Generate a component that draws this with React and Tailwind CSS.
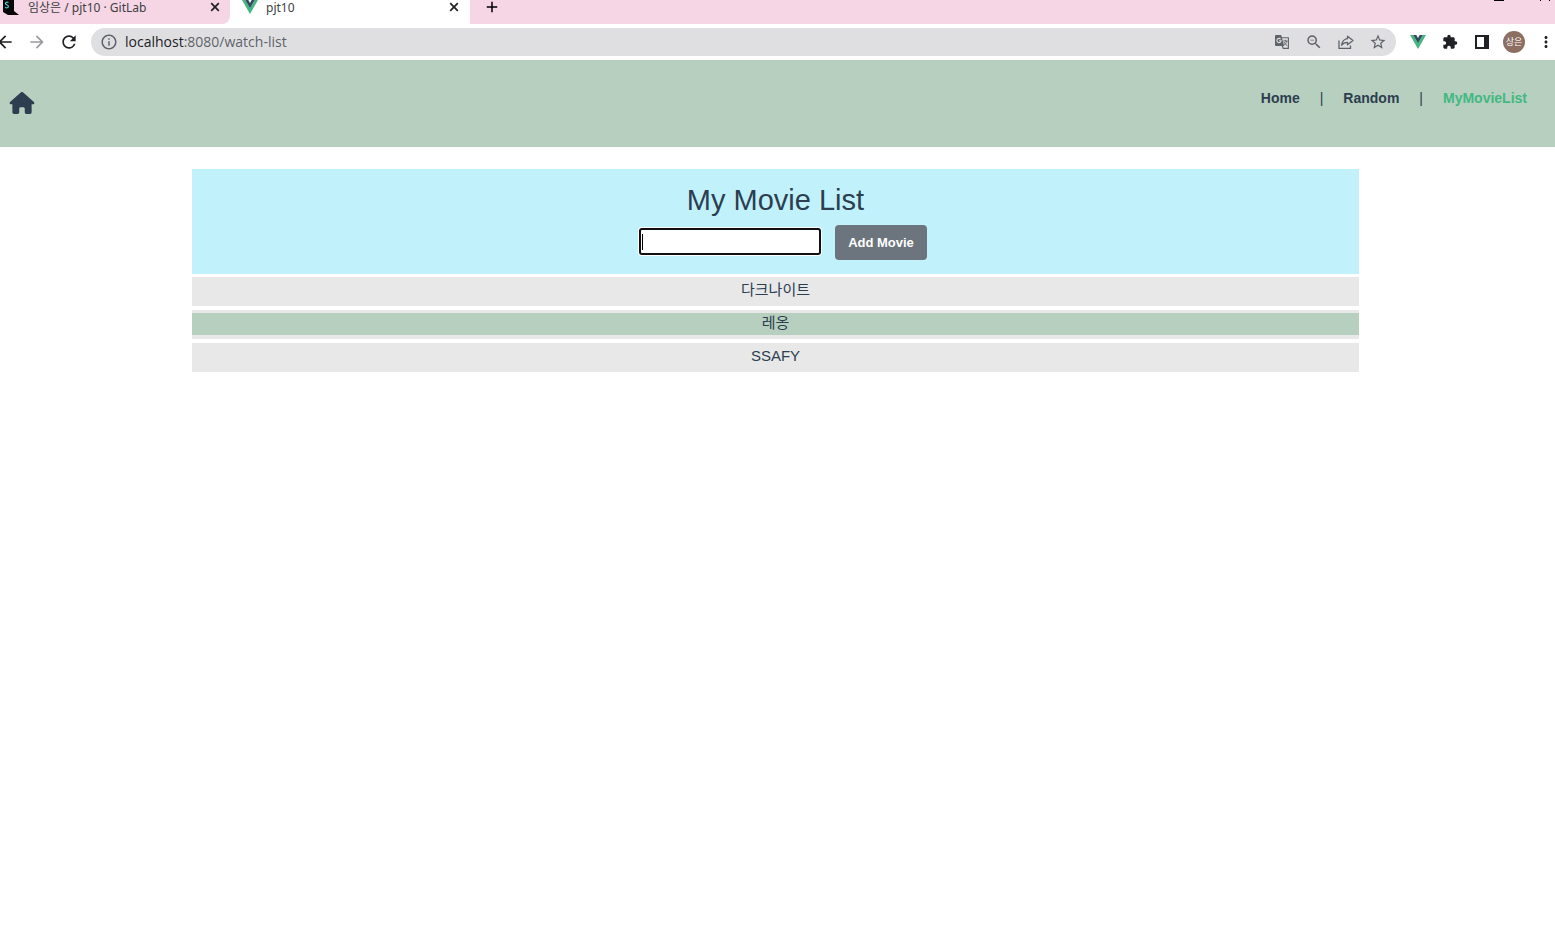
import { useState } from "react";
import { MdArrowBack, MdArrowForward, MdRefresh, MdInfoOutline, MdZoomOut, MdStarBorder, MdExtension, MdMoreVert, MdAdd } from "react-icons/md";
import { FaHouse } from "react-icons/fa6";

function VueLogo({ className }) {
  return (
    <svg viewBox="0 0 16 14" className={className} aria-hidden="true">
      <path d="M0 0h3.2L8 8.3 12.8 0H16L8 14z" fill="#41b883" />
      <path d="M3.2 0h3.1L8 3.1 9.7 0h3.1L8 8.3z" fill="#34495e" />
    </svg>
  );
}

function CloseIcon() {
  return (
    <svg viewBox="0 0 14 14" className="size-[14px]" fill="none" stroke="#202124" strokeWidth="1.7" aria-hidden="true">
      <path d="M3.2 3.2L10.8 10.8M10.8 3.2L3.2 10.8" />
    </svg>
  );
}

function TranslateIcon() {
  return (
    <svg viewBox="0 0 16 16" className="size-4" fill="none" aria-hidden="true">
      <path d="M7.5 3.8H14.4V14.4H9.2L8.2 11.8" stroke="#5f6368" strokeWidth="1.1" />
      <path d="M9.3 7H13.6M11.4 5.8V7M12.8 7C12.3 9.2 11 10.6 9.6 11.4M10.1 8.2C10.8 9.6 12 10.9 13.4 11.8" stroke="#5f6368" />
      <path d="M2 1H7.2L10.2 12H2A1 1 0 0 1 1 11V2A1 1 0 0 1 2 1Z" fill="#5f6368" />
      <path d="M6.6 5.1A2.1 2.1 0 1 0 7.1 6.7H5.1" stroke="#dfdfe2" strokeWidth="1.1" />
    </svg>
  );
}

function ShareIcon() {
  return (
    <svg viewBox="0 0 16 16" className="size-4" fill="none" stroke="#5f6368" strokeWidth="1.3" aria-hidden="true">
      <path d="M1 6.5V14.3H12.5V11.5" />
      <path d="M9.5 2.2L15 6.5L9.5 10.8V8.4C7 8.4 5 9.2 3.6 11.2C4.1 7.8 6 5.2 9.5 4.7Z" strokeLinejoin="round" />
    </svg>
  );
}

function TabStrip() {
  return (
    <div className="flex h-6 bg-[#f6d5e4] text-xs text-[#3c4043]">
      <div className="flex w-[470px] shrink-0 bg-white">
        <div className="flex h-6 w-[230px] items-start rounded-br-lg bg-[#f6d5e4] pl-[3px] pr-2">
          <svg viewBox="0 0 16 15" className="h-[15px] w-4 shrink-0" aria-hidden="true">
            <path d="M0 0H11V11L16 15H5L0 12Z" fill="#080808" />
            <path d="M5.5 2.6C4 1.7 2.4 2.2 2.5 3.6C2.6 5 5.4 4.6 5.4 6.4C5.4 8 3.4 8.2 2 7.2" fill="none" stroke="#4ccfd6" strokeWidth="1.2" />
          </svg>
          <span className="ml-[9px] grow leading-4">임상은 / pjt10 · GitLab</span>
          <button aria-label="Close GitLab tab" className="flex h-[14px] items-center"><CloseIcon /></button>
        </div>
        <div className="flex grow items-start pl-3 pr-[9px]">
          <VueLogo className="h-[14px] w-4" />
          <span className="ml-2 grow leading-4">pjt10</span>
          <button aria-label="Close pjt10 tab" className="flex h-[14px] items-center"><CloseIcon /></button>
        </div>
      </div>
      <div className="flex grow items-start justify-between rounded-bl-lg bg-[#f6d5e4] pl-[13px] text-black">
        <button aria-label="New tab" className="flex h-[14px] items-center"><MdAdd className="size-[18px]" /></button>
        <svg viewBox="0 0 61 2" className="h-[2px] w-[61px]" aria-hidden="true">
          <path d="M0 0H10V1H0ZM46 0H47V1H46ZM55 0H56V1H55Z" fill="#000" />
        </svg>
      </div>
    </div>
  );
}

function AddressBar() {
  return (
    <div className="flex h-9 items-center overflow-hidden bg-white pr-px text-[#202124]">
      <div className="-ml-[5px] flex items-center gap-3 pr-3">
        <button aria-label="Back"><MdArrowBack className="size-5" /></button>
        <button aria-label="Forward" className="text-[#9a9b9e]"><MdArrowForward className="size-5" /></button>
        <button aria-label="Reload"><MdRefresh className="size-5" /></button>
      </div>
      <div className="flex h-7 min-w-0 grow items-center rounded-full bg-[#dfdfe2] px-[9px] text-[#5f6368]">
        <MdInfoOutline className="size-[18px] shrink-0" />
        <a href="#url" className="ml-[7px] grow text-sm [font-family:'Open_Sans',sans-serif]"><span className="text-[#202124]">localhost</span>:8080/watch-list</a>
        <div className="flex items-center gap-[14px]">
          <button aria-label="Translate" className="px-px"><TranslateIcon /></button>
          <button aria-label="Zoom"><MdZoomOut className="size-[18px]" /></button>
          <button aria-label="Share" className="px-px"><ShareIcon /></button>
          <button aria-label="Bookmark"><MdStarBorder className="size-[18px]" /></button>
        </div>
      </div>
      <div className="flex shrink-0 items-center gap-4 pl-[14px]">
        <button aria-label="Vue devtools"><VueLogo className="h-[14px] w-4" /></button>
        <button aria-label="Extensions"><MdExtension className="size-4" /></button>
        <button aria-label="Side panel">
          <svg viewBox="0 0 16 16" className="size-4" aria-hidden="true">
            <path fillRule="evenodd" d="M1 1H15V15H1ZM3 3V13H10V3Z" fill="#202124" />
          </svg>
        </button>
      </div>
      <div className="flex shrink-0 items-center gap-3 pl-[13px]">
        <button aria-label="Profile" className="flex size-[22px] items-center justify-center rounded-full bg-[#8d6e63] text-[9px] text-white">상은</button>
        <button aria-label="Menu" className="-mr-[1px]"><MdMoreVert className="size-[18px]" /></button>
      </div>
    </div>
  );
}

function Header() {
  return (
    <header className="flex h-[87px] justify-between bg-[#b7cfbe] pl-[9px] pr-7 pt-[27px]">
      <a href="#home" aria-label="Home page" className="pt-[5px]"><FaHouse className="h-[22px] w-[26px]" /></a>
      <nav className="flex h-[22px] items-center gap-5 text-sm">
        <a href="#home" className="font-bold">Home</a>
        <span>|</span>
        <a href="#random" className="font-bold">Random</a>
        <span>|</span>
        <a href="#watch-list" className="font-bold text-[#42b983]">MyMovieList</a>
      </nav>
    </header>
  );
}

function MovieList() {
  const [title, setTitle] = useState("");
  const [movies, setMovies] = useState([
    { name: "다크나이트", done: false },
    { name: "레옹", done: true },
    { name: "SSAFY", done: false },
  ]);

  function addMovie(event) {
    event.preventDefault();
    if (!title.trim()) return;
    setMovies([...movies, { name: title.trim(), done: false }]);
    setTitle("");
  }

  return (
    <main className="pr-1 pt-[22px] text-center">
      <div className="mx-auto w-[75.2%]">
        <section className="bg-[#c1f2fc] pb-[14px] pt-[14px]">
          <h1 className="mb-[7px] text-[29px] leading-[35px]">My Movie List</h1>
          <form onSubmit={addMovie} className="flex items-start justify-center gap-[14px] pl-[15px]">
            <div className="relative mt-[3px]">
              <input
                aria-label="Movie title"
                value={title}
                onChange={(event) => setTitle(event.target.value)}
                className="block h-[27px] w-[182px] rounded-[3px] border-2 border-[#101010] bg-white px-px text-sm ring-1 ring-white outline-none"
              />
              <span className="absolute left-[3px] top-[6px] h-4 w-px bg-black" />
            </div>
            <button className="h-[35px] w-[92px] rounded bg-[#6c757d] text-[13px] font-bold text-white">Add Movie</button>
          </form>
        </section>
        <ul className="mt-[3px] flex flex-col gap-1 text-[15px]">
          {movies.map((movie, index) => (
            <li key={index} className="h-[29px] bg-[#e8e8e8] py-[3px]">
              <div className={movie.done ? "h-[22px] bg-[#b7cfbe] leading-5" : "h-[22px] leading-5"}>{movie.name}</div>
            </li>
          ))}
        </ul>
      </div>
    </main>
  );
}

export default function App() {
  return (
    <div className="min-h-screen overflow-x-hidden bg-white text-[#2c3e50] [font-family:'Liberation_Sans','Noto_Sans_CJK_KR',sans-serif]">
      <div className="[font-family:'Noto_Sans','Noto_Sans_CJK_KR',sans-serif]">
        <TabStrip />
        <AddressBar />
      </div>
      <Header />
      <MovieList />
    </div>
  );
}
